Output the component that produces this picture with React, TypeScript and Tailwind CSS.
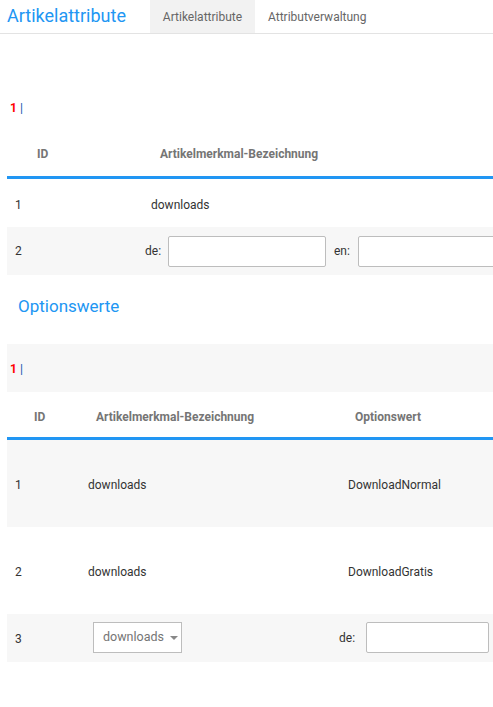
import React from "react";

const font = { fontFamily: "Roboto, 'Liberation Sans', sans-serif" };

function Pager() {
  return (
    <div className="flex items-center text-[12px]">
      <span className="font-bold text-[#ff0000]">1</span>
      <span className="ml-[3px] text-[#1a56b0]">|</span>
    </div>
  );
}

function TextBox({ className }: { className: string }) {
  return (
    <div className={`h-[31px] shrink-0 rounded-[2px] border border-[#bdbdbd] bg-white ${className}`} />
  );
}

export default function App() {
  return (
    <div style={font} className="w-[493px] h-[707px] overflow-hidden bg-white text-[12px] text-[#333]">
      <header className="flex h-[34px] items-stretch border-b border-[#e3e3e3]">
        <h1 className="flex w-[150px] items-center pl-[7px] pb-[3px] text-[18px] text-[#2196f3]">
          Artikelattribute
        </h1>
        <div className="flex w-[105px] items-center justify-center bg-[#f2f2f2] text-[12px] text-[#666]">
          Artikelattribute
        </div>
        <div className="flex items-center pl-[13px] text-[12px] text-[#666]">Attributverwaltung</div>
      </header>

      <div className="pl-[10px] pt-[65px]">
        <Pager />
      </div>

      <section className="ml-[7px] mt-[15px] w-[520px]">
        <div className="flex h-[44px] items-center font-bold text-[#757575]">
          <span className="w-[153px] pl-[30px]">ID</span>
          <span>Artikelmerkmal-Bezeichnung</span>
        </div>
        <div className="h-[3px] bg-[#2196f3]" />
        <div className="flex h-[48px] items-center pt-[3px]">
          <span className="w-[144px] pl-[8px]">1</span>
          <span>downloads</span>
        </div>
        <div className="flex h-[48px] items-center bg-[#f7f7f7]">
          <span className="w-[138px] pl-[8px]">2</span>
          <span className="w-[23px]">de:</span>
          <TextBox className="w-[158px]" />
          <span className="w-[24px] pl-[8px] box-content">en:</span>
          <TextBox className="w-[158px]" />
        </div>
      </section>

      <h2 className="pl-[18px] pt-[19px] text-[17px] text-[#2196f3]">Optionswerte</h2>

      <section className="ml-[7px] mt-[24px]">
        <div className="flex h-[48px] items-center bg-[#f7f7f7] pl-[3px] pt-[2px]">
          <Pager />
        </div>
        <div className="flex h-[45px] items-center pt-[5px] font-bold text-[#757575]">
          <span className="w-[89px] pl-[27px]">ID</span>
          <span className="w-[259px]">Artikelmerkmal-Bezeichnung</span>
          <span>Optionswert</span>
        </div>
        <div className="h-[3px] bg-[#2196f3]" />
        <div className="flex h-[87px] items-center bg-[#f7f7f7] pt-[4px]">
          <span className="w-[81px] pl-[8px]">1</span>
          <span className="w-[260px]">downloads</span>
          <span>DownloadNormal</span>
        </div>
        <div className="flex h-[87px] items-center pt-[4px]">
          <span className="w-[81px] pl-[8px]">2</span>
          <span className="w-[260px]">downloads</span>
          <span>DownloadGratis</span>
        </div>
        <div className="flex h-[48px] items-center bg-[#f7f7f7]">
          <span className="w-[86px] pl-[8px] pt-[3px]">3</span>
          <div className="flex h-[31px] w-[89px] items-center border border-[#bdbdbd] bg-white pl-[9px] text-[12.5px] text-[#757575]">
            downloads
            <span className="ml-[6px] h-0 w-0 border-x-[4px] border-t-[4px] border-x-transparent border-t-[#888]" />
          </div>
          <span className="ml-[157px] w-[27px]">de:</span>
          <TextBox className="w-[123px]" />
        </div>
      </section>
    </div>
  );
}
